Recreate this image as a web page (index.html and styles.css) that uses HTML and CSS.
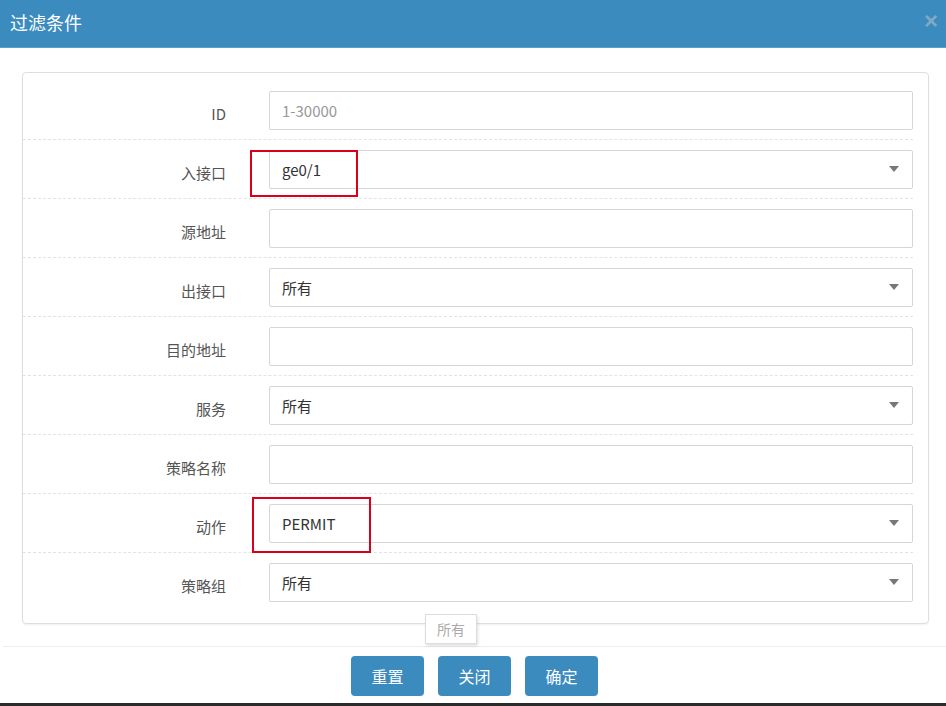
FILE: index.html
```html
<!DOCTYPE html>
<html lang="zh">
<head>
<meta charset="utf-8">
<link rel="stylesheet" href="styles.css">
</head>
<body>
<div class="dialog">
  <div class="header">
    <span class="title">过滤条件</span>
    <span class="close">×</span>
  </div>
  <div class="body">
    <div class="panel">
      <div class="row"><label>ID</label><div class="field"><span class="ph">1-30000</span></div></div>
      <div class="row"><label>入接口</label><div class="field select"><span class="val">ge0/1</span><span class="caret"></span></div><span class="mark mark1"></span></div>
      <div class="row"><label>源地址</label><div class="field"></div></div>
      <div class="row"><label>出接口</label><div class="field select"><span class="val">所有</span><span class="caret"></span></div></div>
      <div class="row"><label>目的地址</label><div class="field"></div></div>
      <div class="row"><label>服务</label><div class="field select"><span class="val">所有</span><span class="caret"></span></div></div>
      <div class="row"><label>策略名称</label><div class="field"></div></div>
      <div class="row"><label>动作</label><div class="field select"><span class="val">PERMIT</span><span class="caret"></span></div><span class="mark mark2"></span></div>
      <div class="row last"><label>策略组</label><div class="field select"><span class="val">所有</span><span class="caret"></span></div><span class="tip">所有</span></div>
    </div>
  </div>
  <div class="footer">
    <button class="btn">重置</button>
    <button class="btn">关闭</button>
    <button class="btn">确定</button>
  </div>
</div>
</body>
</html>
```
FILE: styles.css
```css
html, body { margin: 0; padding: 0; }
body {
  width: 946px;
  height: 706px;
  background: #2b2b2b;
  font-family: "Noto Sans CJK SC", "Open Sans", sans-serif;
  overflow: hidden;
}
.dialog {
  width: 946px;
  height: 703px;
  background: #fff;
  display: flex;
  flex-direction: column;
}
.header {
  height: 48px;
  background: #3b8bbf;
  border-bottom: 1px solid #5b9fcc;
  display: flex;
  align-items: center;
  justify-content: space-between;
  padding: 0 8px 0 10px;
  box-sizing: border-box;
  flex: none;
}
.title {
  color: #fff;
  font-size: 18px;
  margin-top: -4px;
}
.close {
  color: #7fa9c6;
  font-size: 24px;
  font-weight: bold;
  line-height: 1;
  margin-top: -6px;
  font-family: "Liberation Sans", sans-serif;
}
.body {
  padding: 24px 17px 22px 22px;
  flex: none;
}
.panel {
  border: 1px solid #dedede;
  border-radius: 4px;
  padding: 8px 15px 12px 0;
  box-shadow: 0 1px 2px rgba(0,0,0,0.06);
}
.row {
  height: 58px;
  border-bottom: 1px dashed #e3e3e3;
  display: flex;
  align-items: center;
  position: relative;
}
.row.last { border-bottom: none; }
.row label {
  width: 203px;
  text-align: right;
  font-size: 15px;
  color: #555;
  margin-right: 43px;
  margin-top: 6px;
  flex: none;
}
.field {
  flex: 1;
  height: 39px;
  border: 1px solid #d6d6d6;
  border-radius: 2px;
  box-sizing: border-box;
  display: flex;
  align-items: center;
  justify-content: space-between;
  padding: 0 13px 0 12px;
  font-size: 15px;
  color: #333;
}
.ph { color: #999; }
.val { color: #333; }
.caret {
  width: 0;
  height: 0;
  border-left: 5px solid transparent;
  border-right: 5px solid transparent;
  border-top: 6px solid #777;
}
.mark {
  position: absolute;
  border: 2px solid #d9001b;
  box-sizing: border-box;
}
.mark1 { left: 227px; top: 10px; width: 108px; height: 47px; }
.mark2 { left: 229px; top: 3px; width: 119px; height: 56px; }
.tip {
  position: absolute;
  left: 402px;
  top: 61px;
  width: 52px;
  height: 30px;
  box-sizing: border-box;
  border: 1px solid #ddd;
  background: #fff;
  color: #aaa;
  font-size: 14px;
  display: flex;
  align-items: center;
  justify-content: center;
  box-shadow: 1px 2px 3px rgba(0,0,0,0.12);
  z-index: 2;
}
.footer {
  border-top: 1px solid #eee;
  display: flex;
  justify-content: center;
  gap: 14px;
  padding: 9px 0 0 0;
  margin-left: 3px;
}
.btn {
  width: 73px;
  height: 40px;
  border: none;
  border-radius: 4px;
  background: #3b8bbf;
  color: #fff;
  font-family: "Noto Sans CJK SC", sans-serif;
  font-size: 16px;
  padding: 0;
}
```
